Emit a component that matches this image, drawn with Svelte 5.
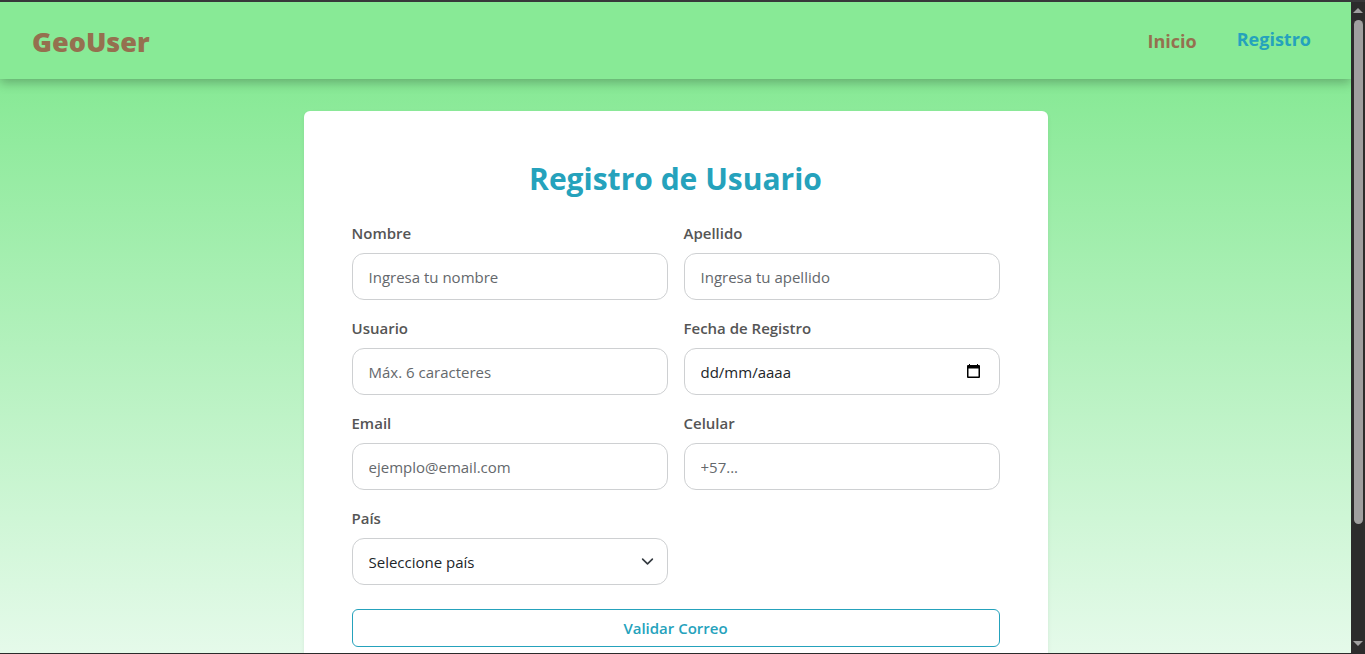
<script>
  const fields = [
    { id: 'nombre', label: 'Nombre', type: 'text', placeholder: 'Ingresa tu nombre' },
    { id: 'apellido', label: 'Apellido', type: 'text', placeholder: 'Ingresa tu apellido' },
    { id: 'usuario', label: 'Usuario', type: 'text', placeholder: 'Máx. 6 caracteres' },
    { id: 'fecha', label: 'Fecha de Registro', type: 'text', placeholder: 'dd/mm/aaaa', calendar: true },
    { id: 'email', label: 'Email', type: 'email', placeholder: 'ejemplo@email.com' },
    { id: 'celular', label: 'Celular', type: 'tel', placeholder: '+57...' }
  ];
</script>

<div class="window">
  <div class="page">
    <header>
      <a class="brand" href="#inicio">GeoUser</a>
      <nav>
        <a href="#inicio">Inicio</a>
        <a class="active" href="#registro">Registro</a>
      </nav>
    </header>

    <main>
      <form class="card">
        <h1>Registro de Usuario</h1>
        <div class="grid">
          {#each fields as f (f.id)}
            <div class="field">
              <label for={f.id}>{f.label}</label>
              <div class="control" class:date={f.calendar}>
                <input id={f.id} type={f.type} placeholder={f.placeholder} />
                {#if f.calendar}
                  <button type="button" class="calendar" aria-label="Abrir calendario">
                    <svg width="13" height="15" viewBox="0 0 13 15" aria-hidden="true">
                      <path fill="#000" fill-rule="evenodd" d="M2 0h1v1h7V0h1v1h1q1 0 1 1v11q0 1-1 1H1q-1 0-1-1V2q0-1 1-1h1zM1.500 4.500v8h10v-8z" />
                    </svg>
                  </button>
                {/if}
              </div>
            </div>
          {/each}
          <div class="field">
            <label for="pais">País</label>
            <div class="control">
              <select id="pais">
                <option>Seleccione país</option>
              </select>
              <svg class="chevron" viewBox="0 0 16 16" aria-hidden="true">
                <path fill="none" stroke="#343a40" stroke-linecap="round" stroke-linejoin="round" stroke-width="2" d="m2 5 6 6 6-6" />
              </svg>
            </div>
          </div>
        </div>
        <button type="button" class="validate">Validar Correo</button>
      </form>
    </main>
  </div>

  <div class="scrollbar" aria-hidden="true">
    <svg width="10" height="6" viewBox="0 0 10 6"><path fill="#9f9f9f" d="M5 0l5 5H0z" /></svg>
    <div class="track"><div class="thumb"></div></div>
    <svg width="10" height="6" viewBox="0 0 10 6"><path fill="#9f9f9f" d="M0 0h10L5 5z" /></svg>
  </div>
</div>

<style>
  :global(body) {
    margin: 0;
    overflow: hidden;
  }
  * {
    box-sizing: border-box;
  }
  .window {
    display: grid;
    grid-template-columns: 1fr 14px;
    height: 100vh;
    border-top: 2px solid #38383a;
    border-bottom: 1px solid #2b2b2b;
    font-family: 'Segoe UI', 'Open Sans', 'Noto Sans', sans-serif;
    font-size: 15px;
    line-height: 24px;
    color: #212529;
  }
  .page {
    overflow: hidden;
    background: linear-gradient(to bottom, #87e995 77px, #e5faea);
  }
  header {
    position: relative;
    display: flex;
    align-items: center;
    justify-content: space-between;
    height: 77px;
    padding: 0 40px 0 32px;
    background: #88ea96;
    box-shadow: 0 4px 10px rgba(0, 0, 0, 0.25);
  }
  a {
    color: #95704f;
    text-decoration: none;
  }
  .brand {
    font-size: 27px;
    line-height: 40px;
    font-weight: 800;
    padding-top: 2px;
  }
  nav {
    display: flex;
    gap: 40px;
    font-size: 18px;
    font-weight: 700;
  }
  nav .active {
    color: #25a2bc;
    transform: translateY(-2px);
  }
  main {
    padding: 32px 16px;
  }
  .card {
    max-width: 744px;
    margin: 0 auto;
    padding: 48px;
    background: #fff;
    border-radius: 6px;
    box-shadow: 0 2px 4px rgba(0, 0, 0, 0.075);
  }
  h1 {
    margin: 0 0 22px;
    font-size: 30px;
    line-height: 40px;
    font-weight: 700;
    text-align: center;
    color: #25a2bc;
  }
  .grid {
    display: grid;
    grid-template-columns: 1fr 1fr;
    gap: 16px;
  }
  label {
    display: block;
    margin-bottom: 8px;
    font-weight: 600;
    color: #555;
  }
  .control {
    position: relative;
  }
  input,
  select {
    display: block;
    width: 100%;
    height: 47px;
    padding: 0 16px;
    border: 1px solid #ced0d2;
    border-radius: 12px;
    background: #fff;
    font: inherit;
    color: inherit;
    appearance: none;
  }
  input::placeholder {
    color: #64686c;
    opacity: 1;
  }
  .date input::placeholder {
    color: #212529;
  }
  .calendar {
    position: absolute;
    top: 0;
    right: 16px;
    display: flex;
    align-items: center;
    height: 100%;
    padding: 0 4px;
    border: 0;
    background: none;
  }
  .chevron {
    position: absolute;
    right: 14px;
    top: 17px;
    width: 13px;
    height: 13px;
    pointer-events: none;
  }
  .validate {
    width: 100%;
    height: 38px;
    margin-top: 24px;
    border: 1px solid #25a2bc;
    border-radius: 6px;
    background: #fff;
    font: inherit;
    font-weight: 600;
    color: #25a2bc;
  }
  .scrollbar {
    display: flex;
    flex-direction: column;
    align-items: center;
    padding: 6px 0;
    background: #2c2c2c;
  }
  .track {
    flex: 1;
    padding: 6px 0;
  }
  .thumb {
    width: 9px;
    height: 82%;
    border-radius: 5px;
    background: #9f9f9f;
  }
</style>
